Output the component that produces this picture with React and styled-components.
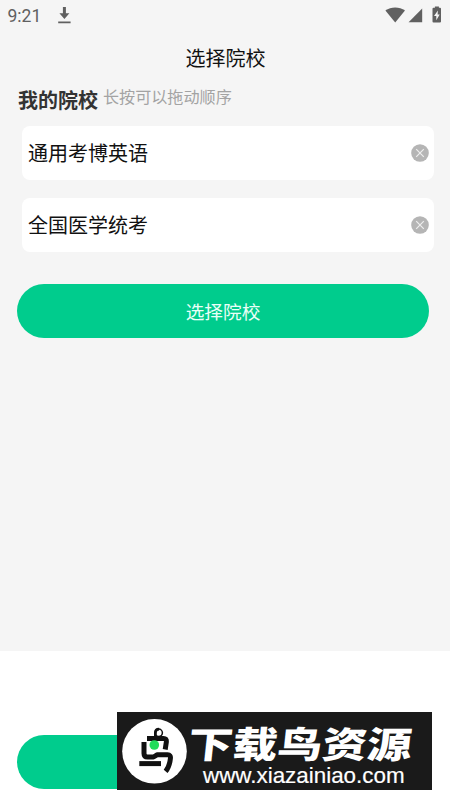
import React from 'react';
import styled, { createGlobalStyle } from 'styled-components';

const GlobalStyle = createGlobalStyle`
  * { box-sizing: border-box; }
  body { margin: 0; background: #fff; font-family: Roboto, "Noto Sans CJK SC", sans-serif; }
  button { font-family: inherit; border: 0; padding: 0; }
`;

const Screen = styled.div`
  position: relative;
  width: 450px;
  height: 800px;
  overflow: hidden;
  display: flex;
  flex-direction: column;
  background: #fff;
`;

const Content = styled.main`
  height: 651px;
  display: flex;
  flex-direction: column;
  background: #f5f5f5;
`;

const StatusBar = styled.header`
  height: 32px;
  padding: 0 8px 0 7px;
  display: flex;
  align-items: center;
  justify-content: space-between;
  color: #606060;
  font-size: 17.5px;
`;

const StatusGroup = styled.div`
  display: flex;
  align-items: center;
  svg { display: block; }
`;

const Clock = styled.span`
  width: 50px;
  padding-left: 0.5px;
  line-height: 32px;
`;

const Title = styled.h1`
  margin: 12px 0 0 1px;
  height: 30px;
  line-height: 30px;
  text-align: center;
  font-size: 20px;
  font-weight: 400;
  color: #111;
`;

const SectionHeading = styled.div`
  display: flex;
  align-items: center;
  height: 30px;
  margin-top: 11px;
  padding-left: 18px;
  gap: 5px;
`;

const SectionTitle = styled.h2`
  margin: 0;
  padding-top: 1px;
  font-size: 20px;
  line-height: 30px;
  font-weight: 700;
  color: #333;
`;

const Hint = styled.span`
  font-size: 16.1px;
  line-height: 24px;
  padding-bottom: 4px;
  color: #a3a3a3;
`;

const List = styled.ul`
  list-style: none;
  margin: 11px 16px 0 22px;
  padding: 0;
  display: flex;
  flex-direction: column;
  gap: 18px;
`;

const Card = styled.li`
  height: 54px;
  padding: 0 5px 0 6px;
  display: flex;
  align-items: center;
  justify-content: space-between;
  border-radius: 8px;
  background: #fff;
  color: #111;
  font-size: 20px;
`;

const SchoolName = styled.span`
  padding-bottom: 2px;
`;

const RemoveButton = styled.button`
  width: 18px;
  height: 18px;
  background: none;
  svg { display: block; }
`;

const PillButton = styled.button`
  flex: none;
  width: 412px;
  height: 54px;
  margin: ${({ $top }) => $top}px 0 0 17px;
  padding-bottom: 2px;
  border-radius: 27px;
  background: #00cc8d;
  color: #e9fff7;
  font-size: 18.7px;
`;

const Watermark = styled.aside`
  position: absolute;
  left: 117px;
  top: 712px;
  width: 315px;
  height: 78px;
  padding-left: 5px;
  display: flex;
  align-items: center;
  background: #1a1a1a;
  color: #fff;
  svg { display: block; flex: none; }
`;

const Brand = styled.div`
  height: 78px;
  display: flex;
  flex-direction: column;
  white-space: nowrap;
`;

const BrandName = styled.div`
  height: 52px;
  margin-left: 1px;
  padding-top: 5px;
  line-height: 52px;
  font-family: "Noto Sans CJK SC", sans-serif;
  font-size: 36.5px;
  font-weight: 900;
  transform-origin: left center;
  transform: scaleX(1.225) skewX(-5deg);
`;

const BrandUrl = styled.div`
  margin: 0 0 0 15px;
  line-height: 24px;
  font-family: "Liberation Sans", sans-serif;
  font-size: 22.4px;
  -webkit-text-stroke: 0.2px #fff;
`;

const schools = ['通用考博英语', '全国医学统考'];

function DownloadIcon() {
  return (
    <svg width="15" height="18" viewBox="0 0 15 18" fill="#606060">
      <path d="M5.9 0h3v6.2h3.5L7.4 12 2.4 6.2h3.5zM1.2 14.5h12.4v1.7H1.2z" />
    </svg>
  );
}

function StatusIcons() {
  return (
    <svg width="58" height="20" viewBox="0 0 58 20" fill="#606060">
      <path d="M1.4 4.6C7 .3 15.4.3 21 4.6L11.2 16.5z" />
      <path d="M38.2 2.4V16.2H24.6z" />
      <path d="M49.5 1.8h1.4V.4h4v1.4H56a1 1 0 0 1 1 1v12.6a1 1 0 0 1-1 1h-6.5a1 1 0 0 1-1-1V2.8a1 1 0 0 1 1-1z" />
      <path fill="#f5f5f5" d="M53.9 4.4L50 9.9h2.3v4.4l3.4-5.7h-2.1z" />
    </svg>
  );
}

function CloseIcon() {
  return (
    <svg width="18" height="18" viewBox="0 0 18 18">
      <circle cx="9" cy="9" r="8.8" fill="#b5b5b5" />
      <path d="M5.2 5.2l7.6 7.6M12.8 5.2l-7.6 7.6" stroke="#eee" strokeWidth="1.2" />
    </svg>
  );
}

function BirdLogo() {
  return (
    <svg width="66" height="66" viewBox="0 0 66 66">
      <circle cx="32.5" cy="33.3" r="32.3" fill="#fff" />
      <circle cx="36.7" cy="14.8" r="3.7" fill="#fff" stroke="#111" strokeWidth="1.5" />
      <path d="M33.4 18v-3.2q0-3.7 3.7-3.7" fill="none" stroke="#111" strokeWidth="2.8" />
      <g fill="none" stroke="#111" strokeWidth="5" strokeLinejoin="round">
        <path d="M25 20.5h16.5q3.2 0 2.9 3.2l-1.2 7.8" />
        <path d="M22 24v11.5q0 3.5 3.5 3.5h6l3.5-2.2h10.6q3.3 0 2.8 3.6c-.6 5.5-1.3 9-4.8 13" />
        <path d="M17.3 45.6H39" />
      </g>
      <circle cx="32.3" cy="27" r="4.8" fill="#20dc5a" />
    </svg>
  );
}

export default function App() {
  return (
    <>
      <GlobalStyle />
      <Screen>
        <Content>
          <StatusBar>
            <StatusGroup>
              <Clock>9:21</Clock>
              <DownloadIcon />
            </StatusGroup>
            <StatusGroup>
              <StatusIcons />
            </StatusGroup>
          </StatusBar>
          <Title>选择院校</Title>
          <SectionHeading>
            <SectionTitle>我的院校</SectionTitle>
            <Hint>长按可以拖动顺序</Hint>
          </SectionHeading>
          <List>
            {schools.map((name) => (
              <Card key={name}>
                <SchoolName>{name}</SchoolName>
                <RemoveButton aria-label="删除">
                  <CloseIcon />
                </RemoveButton>
              </Card>
            ))}
          </List>
          <PillButton $top={32}>选择院校</PillButton>
        </Content>
        <PillButton $top={84} aria-label="确定" />
        <Watermark>
          <BirdLogo />
          <Brand>
            <BrandName>下载鸟资源</BrandName>
            <BrandUrl>www.xiazainiao.com</BrandUrl>
          </Brand>
        </Watermark>
      </Screen>
    </>
  );
}
